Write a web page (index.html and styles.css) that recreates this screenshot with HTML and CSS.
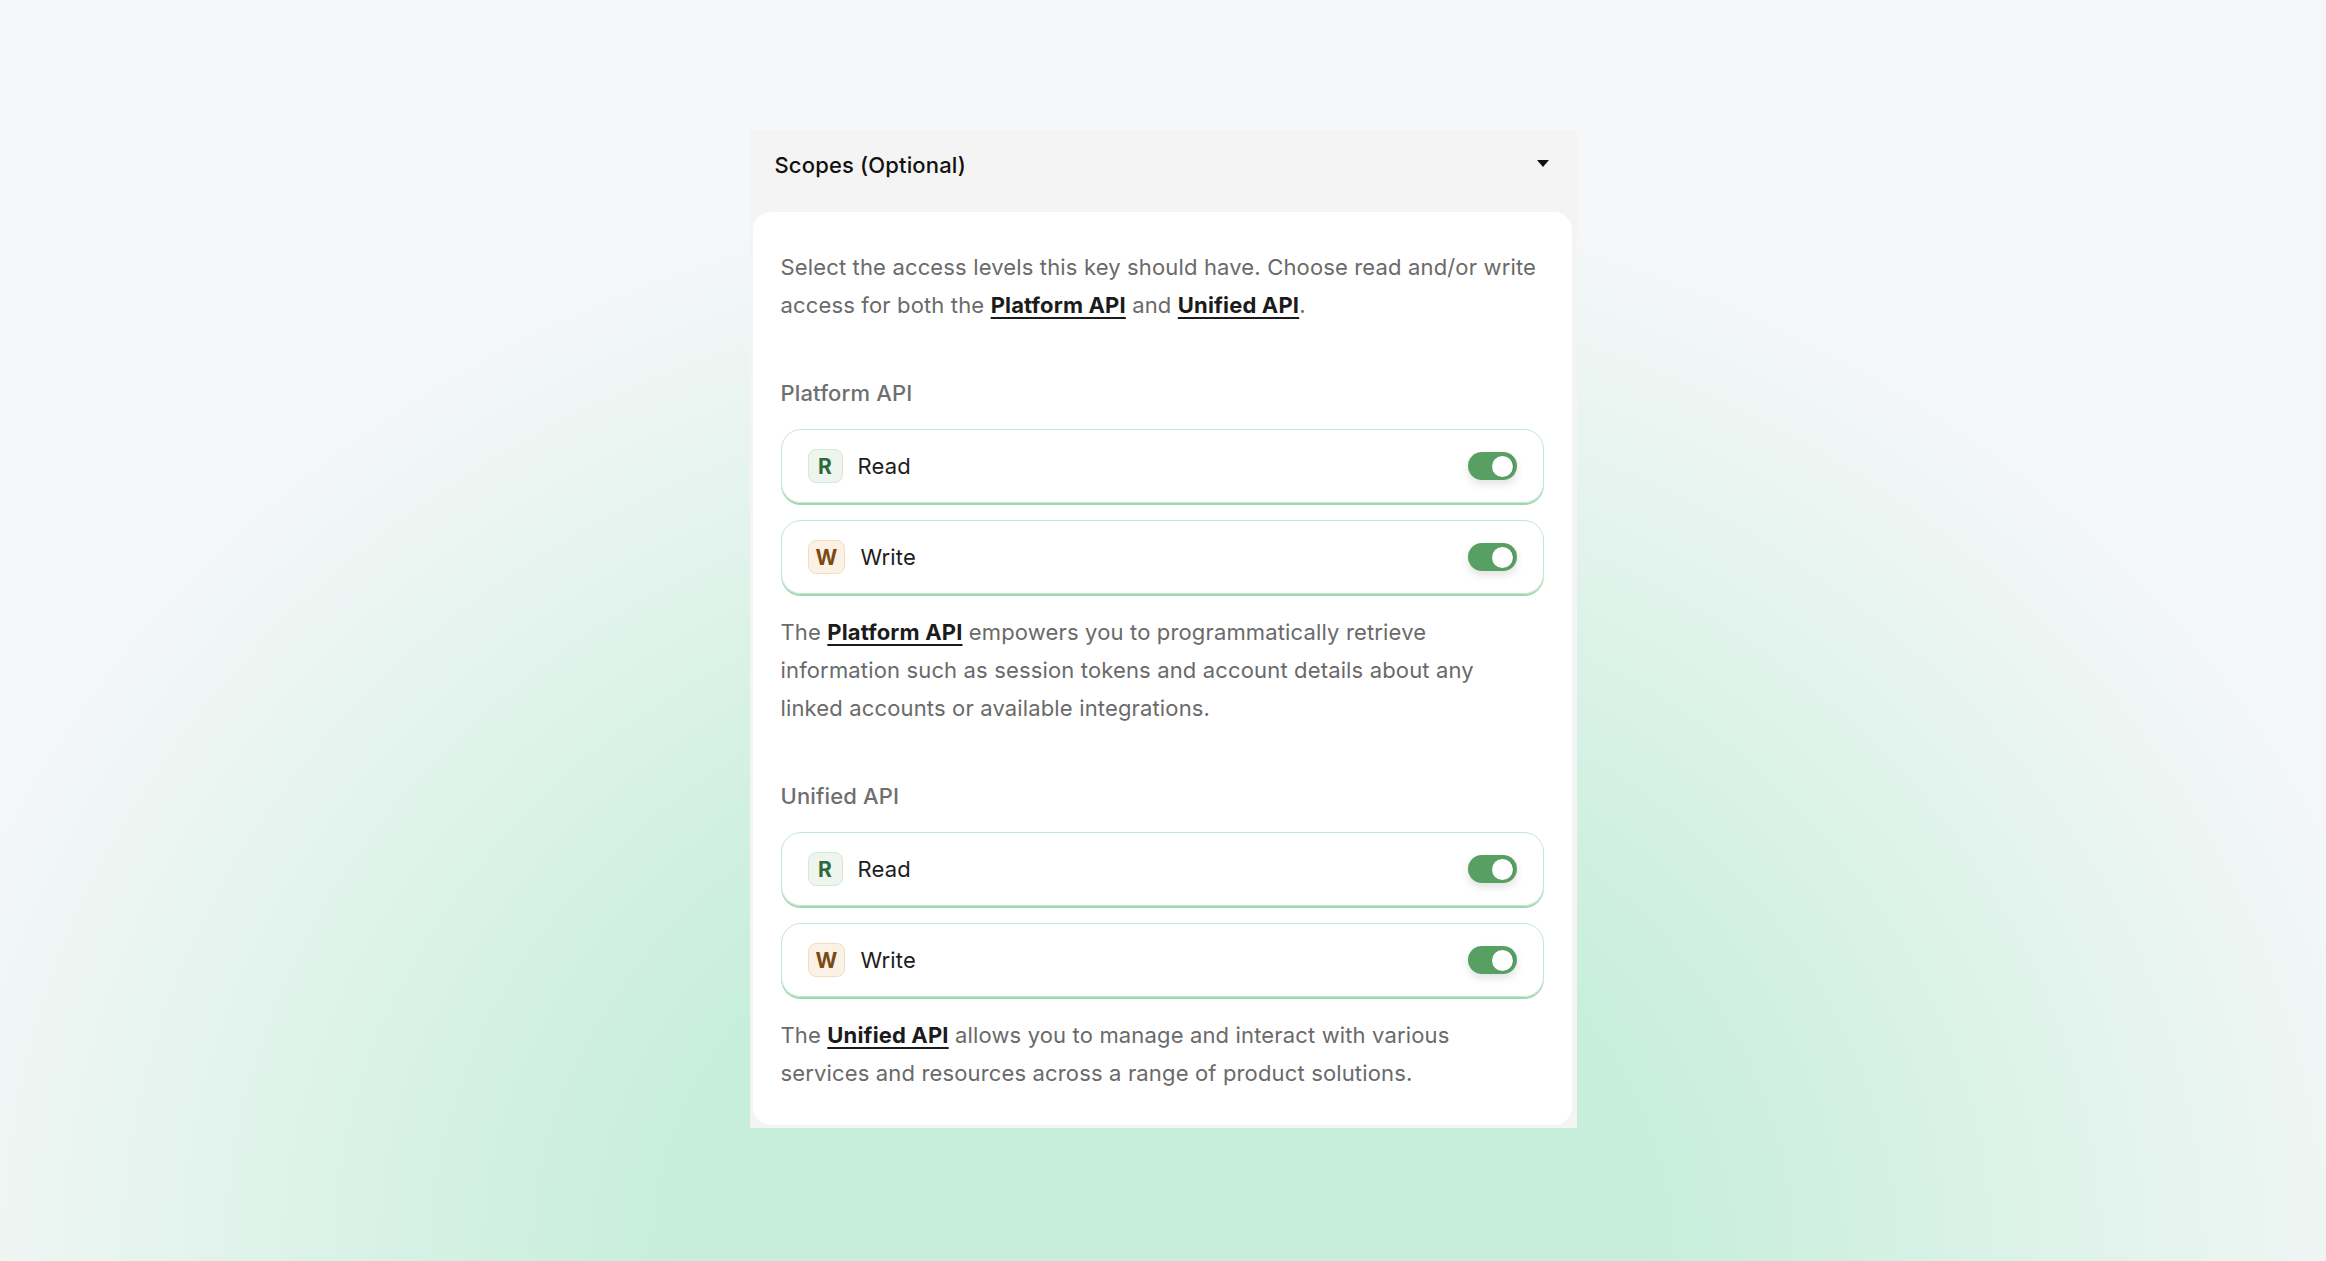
FILE: index.html
```html
<!DOCTYPE html>
<html lang="en">
<head>
    <meta charset="UTF-8">
    <meta name="viewport" content="width=device-width, initial-scale=1.0">
    <title>API Key Scopes</title>
    <link rel="stylesheet" href="styles.css">
</head>
<body>
    <main>
        <section class="scopes">
            <div class="scopes-header">
                <span>Scopes (Optional)</span>
                <span class="caret"></span>
            </div>
            <div class="scopes-card">
                <p class="desc">
                    Select the access levels this key should have. Choose read and/or write
                    access for both the <a href="#">Platform API</a> and <a href="#">Unified API</a>.
                </p>

                <div class="group">
                    <h3 class="group-title">Platform API</h3>
                    <div class="rows">
                        <label class="row">
                            <span class="badge badge-read">R</span>
                            <span class="row-label">Read</span>
                            <span class="toggle on"><span class="knob"></span></span>
                        </label>
                        <label class="row">
                            <span class="badge badge-write">W</span>
                            <span class="row-label">Write</span>
                            <span class="toggle on"><span class="knob"></span></span>
                        </label>
                    </div>
                    <p class="desc note">
                        The <a href="#">Platform API</a> empowers you to programmatically retrieve
                        information such as session tokens and account details about any
                        linked accounts or available integrations.
                    </p>
                </div>

                <div class="group">
                    <h3 class="group-title">Unified API</h3>
                    <div class="rows">
                        <label class="row">
                            <span class="badge badge-read">R</span>
                            <span class="row-label">Read</span>
                            <span class="toggle on"><span class="knob"></span></span>
                        </label>
                        <label class="row">
                            <span class="badge badge-write">W</span>
                            <span class="row-label">Write</span>
                            <span class="toggle on"><span class="knob"></span></span>
                        </label>
                    </div>
                    <p class="desc note">
                        The <a href="#">Unified API</a> allows you to manage and interact with various
                        services and resources across a range of product solutions.
                    </p>
                </div>
            </div>
        </section>
    </main>
</body>
</html>
```

FILE: styles.css
```css
* {
    padding: 0;
    margin: 0;
    box-sizing: border-box;
    font-family: Inter, "Noto Sans", sans-serif;
}
body {
    min-height: 100vh;
    letter-spacing: 0.15px;
    background-color: #f6f7f9;
    background-image: radial-gradient(ellipse 1300px 1100px at 50% 100%, #c6eedb 0%, #c6eedb 37%, #f6f7f9 100%);
}
main {
    display: flex;
    justify-content: center;
    padding-top: 130px;
}
.scopes {
    width: 827px;
    background-color: #f4f4f4;
    padding: 0 5px 3px 3px;
}
.scopes-header {
    height: 70px;
    display: flex;
    align-items: center;
    justify-content: space-between;
    padding: 0 23px 0 22px;
    font-size: 22px;
    font-weight: 500;
    color: #111;
    margin-bottom: 12px;
}
.caret {
    width: 0;
    height: 0;
    border-left: 6.5px solid transparent;
    border-right: 6.5px solid transparent;
    border-top: 7px solid #111;
    margin-top: -4px;
}
.scopes-card {
    background-color: #fff;
    border-radius: 18px;
    padding: 36px 28px 33px 28px;
}
.desc {
    font-size: 22px;
    line-height: 38px;
    color: #6a6a6a;
}
.desc a {
    color: #1b1b1b;
    font-weight: 700;
    text-decoration: underline;
    text-decoration-thickness: 2px;
    text-underline-offset: 4px;
}
.group {
    margin-top: 54px;
}
.group-title {
    font-size: 22px;
    line-height: 30px;
    font-weight: 500;
    color: #6f6f6f;
    margin-bottom: 21px;
}
.rows {
    display: flex;
    flex-direction: column;
    gap: 17px;
}
.row {
    height: 74px;
    display: flex;
    align-items: center;
    gap: 15px;
    padding: 0 26px;
    border: 1px solid #c3e8d0;
    border-radius: 20px;
    box-shadow: 0 2px 0 #9fd7b1;
    font-size: 22px;
    color: #1d1d1d;
}
.row-label {
    flex: 1;
}
.badge {
    min-width: 35px;
    height: 34px;
    padding: 0 7px;
    display: flex;
    align-items: center;
    justify-content: center;
    border-radius: 8px;
    font-weight: 700;
    font-size: 21px;
}
.badge-read {
    background-color: #edf5ee;
    border: 1px solid #d4e9d9;
    color: #2e6a39;
}
.badge-write {
    background-color: #fbf1e5;
    border: 1px solid #f3ddc2;
    color: #7a4a14;
}
.toggle {
    width: 49px;
    height: 28px;
    border-radius: 14px;
    background-color: #ccc;
    display: flex;
    align-items: center;
    padding: 0 4px;
    box-shadow: 0 4px 8px rgba(0, 0, 0, 0.12);
}
.toggle.on {
    background-color: #589f63;
    justify-content: flex-end;
}
.knob {
    width: 21px;
    height: 21px;
    border-radius: 50%;
    background-color: #fff;
    box-shadow: 1px 0 0 #468a52;
}
.note {
    margin-top: 19px;
    max-width: 740px;
}
```
